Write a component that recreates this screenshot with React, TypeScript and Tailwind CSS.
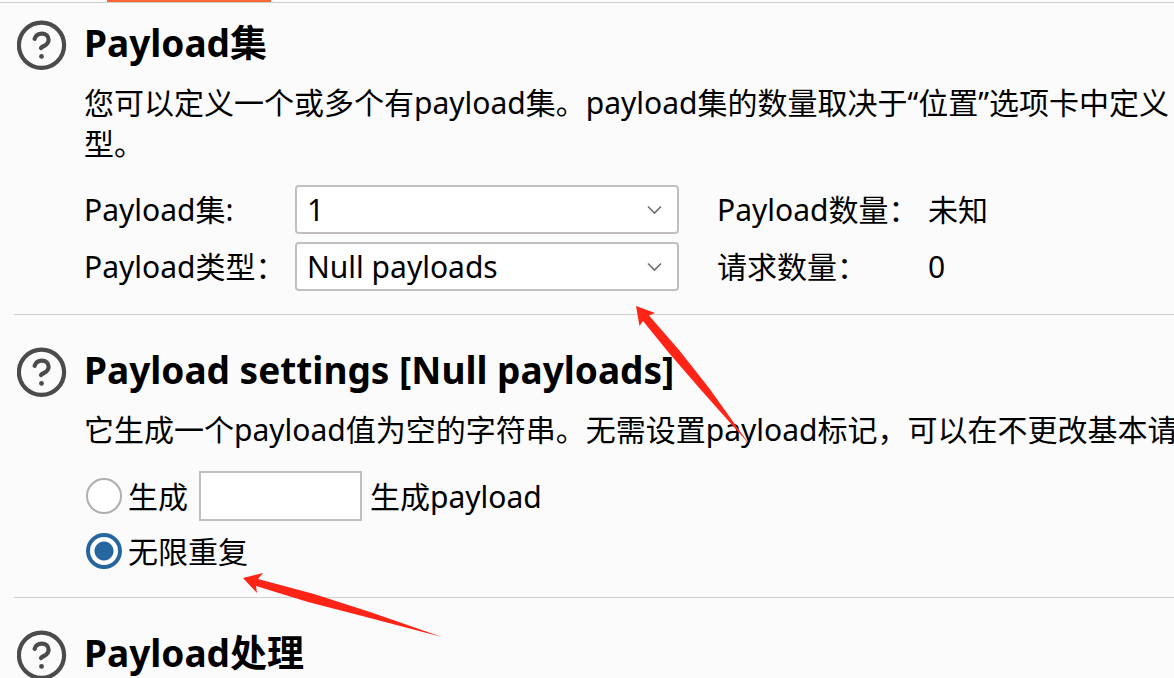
import * as React from "react";

function HelpButton() {
  return (
    <button type="button" aria-label="帮助" className="h-[50px] w-[50px] shrink-0">
      <svg viewBox="0 0 50 50" fill="none" className="h-full w-full">
        <circle cx="24.5" cy="25.3" r="22.6" stroke="#4b4b4b" strokeWidth="4.2" />
        <path
          d="M17.6 18.8C18.6 15.6 21.3 13.6 24.8 13.6C28.8 13.6 31.6 16.2 31.6 19.8C31.6 22.8 29.8 24.6 27 26C25.4 26.8 24.6 27.2 24 28"
          stroke="#4b4b4b"
          strokeWidth="4.2"
          strokeLinecap="round"
          strokeLinejoin="round"
        />
        <circle cx="24.5" cy="36.4" r="2.4" fill="#4b4b4b" />
      </svg>
    </button>
  );
}

function Section({ title, children }: { title: string; children?: React.ReactNode }) {
  return (
    <section className="flex gap-[17px] pl-[3px]">
      <HelpButton />
      <div className="min-w-0 flex-1">
        <h2 className="text-[37px] leading-[46px] font-bold whitespace-nowrap">{title}</h2>
        {children}
      </div>
    </section>
  );
}

function Select({ id, options }: { id: string; options: string[] }) {
  return (
    <div className="relative">
      <select
        id={id}
        className="block h-[49px] w-full appearance-none rounded-[4px] border-2 border-[#c3bfc1] bg-white pr-12 pl-2.5 leading-[44px] outline-none"
      >
        {options.map((o) => (
          <option key={o}>{o}</option>
        ))}
      </select>
      <svg
        viewBox="0 0 16 10"
        fill="none"
        className="pointer-events-none absolute top-5 right-4 h-2.5 w-4"
      >
        <path d="M1 1.5L7.5 8L14 1.5" stroke="#6e6e6e" strokeWidth="1.6" />
      </svg>
    </div>
  );
}

function Radio({
  id,
  checked,
  onChange,
}: {
  id: string;
  checked: boolean;
  onChange: () => void;
}) {
  return (
    <input
      id={id}
      type="radio"
      name="mode"
      checked={checked}
      onChange={onChange}
      className="mr-1.5 h-9 w-9 shrink-0 appearance-none rounded-full border-2 border-[#afafaf] bg-white checked:border-4 checked:border-[#2666a0] checked:bg-[radial-gradient(circle,#2666a0_9px,#ffffff_10px)]"
    />
  );
}

export default function App() {
  const [mode, setMode] = React.useState("infinite");
  const [count, setCount] = React.useState("");

  return (
    <main className="relative h-screen overflow-hidden bg-[#fbfbfb] font-['Noto_Sans','Noto_Sans_CJK_SC',sans-serif] text-[30px] leading-[41px] text-black">
      <div className="border-b border-[#c8d0d0]">
        <div className="ml-[107px] h-0.5 w-[164px] bg-[#ff6633]" />
      </div>

      <div className="pl-3.5">
        <div className="pt-[17px] pb-[23px]">
          <Section title="Payload集">
            <p className="mt-4 whitespace-nowrap">
              您可以定义一个或多个有payload集。payload集的数量取决于“位置”选项卡中定义
              <br />
              型。
            </p>
            <div className="mt-[21px] grid grid-cols-[211px_384px_249px_auto] items-center gap-y-2 whitespace-nowrap">
              <label htmlFor="payload-set">Payload集:</label>
              <Select id="payload-set" options={["1"]} />
              <span className="pl-[38px]">Payload数量：</span>
              <span>未知</span>
              <label htmlFor="payload-type">Payload类型：</label>
              <Select id="payload-type" options={["Null payloads"]} />
              <span className="pl-[38px]">请求数量：</span>
              <span>0</span>
            </div>
          </Section>
        </div>

        <div className="border-t border-[#cfcfcf] pt-8 pb-[21px]">
          <Section title="Payload settings [Null payloads]">
            <p className="mt-4 whitespace-nowrap">
              它生成一个payload值为空的字符串。无需设置payload标记，可以在不更改基本请
            </p>
            <div className="mt-[21px] pl-0.5">
              <div className="flex h-[50px] items-center">
                <Radio
                  id="mode-count"
                  checked={mode === "count"}
                  onChange={() => setMode("count")}
                />
                <label htmlFor="mode-count">生成</label>
                <input
                  id="count"
                  type="text"
                  value={count}
                  onChange={(e) => setCount(e.target.value)}
                  className="mr-2 ml-[11px] h-[50px] w-[163px] border-2 border-[#c3bfc1] bg-white px-2 outline-none"
                />
                <label htmlFor="count">生成payload</label>
              </div>
              <div className="mt-[5px] flex h-[50px] items-center">
                <Radio
                  id="mode-infinite"
                  checked={mode === "infinite"}
                  onChange={() => setMode("infinite")}
                />
                <label htmlFor="mode-infinite">无限重复</label>
              </div>
            </div>
          </Section>
        </div>

        <div className="border-t border-[#cfcfcf] pt-8">
          <Section title="Payload处理" />
        </div>
      </div>

      {/* hand-drawn pointers over the form */}
      <svg
        viewBox="0 0 114 140"
        className="pointer-events-none absolute top-[305px] left-[635px] h-[140px] w-[114px]"
      >
        <path d="M1 1L20 8L14 10.5L44 45L74 83L114 139L66 85L34 48L8 16L4.5 21Z" fill="#ff2416" />
      </svg>
      <svg
        viewBox="0 0 200 68"
        className="pointer-events-none absolute top-[572px] left-[242px] h-[68px] w-[200px]"
      >
        <path d="M1 6L21 1L16 7L72 22L128 40L200 65L124 45L66 30L14 14L15 21Z" fill="#ff2416" />
      </svg>
    </main>
  );
}
